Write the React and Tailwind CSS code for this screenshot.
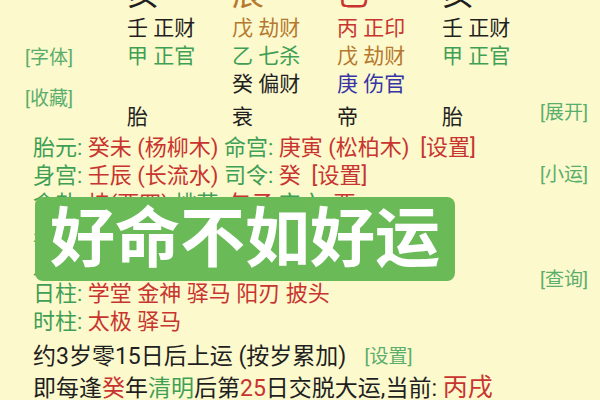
import React from 'react';

const tone = {
  k: 'text-[#1f1f1f]',
  g: 'text-[#3f9f55]',
  r: 'text-[#c8342f]',
  o: 'text-[#b5782e]',
  b: 'text-[#3535a5]',
  l: 'text-[#5aae6c]',
};

const branches = [
  ['亥', 'k'],
  ['辰', 'o'],
  ['巳', 'r'],
  ['亥', 'k'],
];

const hidden = [
  [['壬 正财', 'k'], ['戊 劫财', 'o'], ['丙 正印', 'r'], ['壬 正财', 'k']],
  [['甲 正官', 'g'], ['乙 七杀', 'g'], ['戊 劫财', 'o'], ['甲 正官', 'g']],
  [null, ['癸 偏财', 'k'], ['庚 伤官', 'b'], null],
];

const stages = ['胎', '衰', '帝', '胎'];

// each line is a list of [text, tone]
const infoLines = [
  [['胎元: ', 'g'], ['癸未 (杨柳木) ', 'r'], ['命宫: ', 'g'], ['庚寅 (松柏木)  [设置]', 'r']],
  [['身宫: ', 'g'], ['壬辰 (长流水) ', 'r'], ['司令: ', 'g'], ['癸  [设置]', 'r']],
  [['命卦: ', 'g'], ['坤(西四) ', 'r'], ['桃花: ', 'g'], ['午子 ', 'r'], ['空亡: ', 'g'], ['酉', 'r']],
];

const pillars = [
  [['年柱: ', 'g'], ['天乙 文昌 华盖', 'r']],
  [['月柱: ', 'g'], ['月德 天德 国印', 'r']],
  [['日柱: ', 'g'], ['学堂 金神 驿马 阳刃 披头', 'r']],
  [['时柱: ', 'g'], ['太极 驿马', 'r']],
];

function Line({ parts, className = '' }) {
  return (
    <div className={`h-[28px] leading-[28px] whitespace-pre ${className}`}>
      {parts.map(([t, c], i) => (
        <span key={i} className={tone[c]}>{t}</span>
      ))}
    </div>
  );
}

export default function App() {
  return (
    <div className="relative flex h-[400px] w-[600px] overflow-hidden bg-[#fcf9cd] font-[family-name:Roboto,'Noto_Sans_CJK_SC',sans-serif]">
      <div className="w-[540px]">
        {/* chart grid */}
        <div className="flex">
          <div className="w-[127px] pl-[25px] pt-[44px] text-[19px] leading-[28px] text-[#5aae6c]">
            <div>[字体]</div>
            <div className="mt-[13px]">[收藏]</div>
          </div>
          <div className="-mt-[22px] w-[413px] text-[21px]">
            <div className="grid h-[32px] grid-cols-[105px_105px_105px_98px] text-[32px] leading-[32px]">
              {branches.map(([t, c], i) => (
                <div key={i} className={tone[c]}>{t}</div>
              ))}
            </div>
            <div className="mt-[4px]">
              {hidden.map((row, r) => (
                <div key={r} className="grid h-[28px] grid-cols-[105px_105px_105px_98px] leading-[28px]">
                  {row.map((cell, i) => (
                    <div key={i} className={cell ? tone[cell[1]] : ''}>{cell ? cell[0] : ''}</div>
                  ))}
                </div>
              ))}
            </div>
            <div className="mt-[5px] grid h-[28px] grid-cols-[105px_105px_105px_98px] leading-[28px] text-[#1f1f1f]">
              {stages.map((s, i) => (
                <div key={i}>{s}</div>
              ))}
            </div>
          </div>
        </div>

        {/* details */}
        <div className="pl-[33px] pt-[3px] text-[22px]">
          {infoLines.map((parts, i) => (
            <Line key={i} parts={parts} />
          ))}
          <div className="mt-[6px]">
            {pillars.map((parts, i) => (
              <Line key={i} parts={parts} />
            ))}
          </div>
          <div className="mt-[7px] flex h-[28px] items-center whitespace-pre text-[23px] leading-[28px] text-[#1f1f1f]">
            <span>约3岁零15日后上运 (按岁累加)</span>
            <span className="ml-[18px] text-[19px] text-[#5aae6c]">[设置]</span>
          </div>
          <div className="mt-[3px] h-[28px] whitespace-pre text-[23px] leading-[28px] text-[#1f1f1f]">
            即每逢<span className={tone.r}>癸</span>年<span className={tone.g}>清明</span>后第<span className={tone.r}>25</span>日交脱大运,当前: <span className="text-[25px] text-[#c8342f]">丙戌</span>
          </div>
        </div>
      </div>

      {/* side actions */}
      <div className="w-[60px] pt-[99px] text-[19px] leading-[28px] text-[#5aae6c]">
        <div>[展开]</div>
        <div className="mt-[34px]">[小运]</div>
        <div className="mt-[77px]">[查询]</div>
      </div>

      {/* overlay caption */}
      <div className="absolute left-[35px] top-[197px] flex h-[84px] w-[420px] items-center justify-center rounded-[8px] bg-[#6aba58]">
        <span className="text-[65px] font-bold leading-none text-white">好命不如好运</span>
      </div>
    </div>
  );
}
